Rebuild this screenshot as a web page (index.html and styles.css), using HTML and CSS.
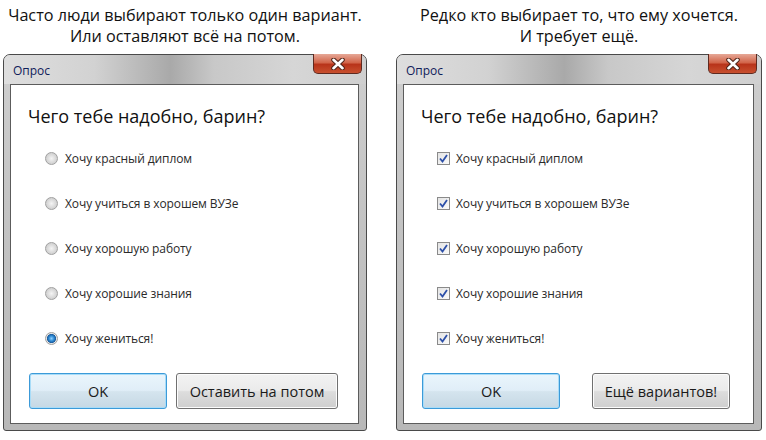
FILE: index.html
```html
<!DOCTYPE html>
<html lang="ru">
<head>
    <meta charset="UTF-8">
    <title>Опрос</title>
    <link rel="stylesheet" href="styles.css">
</head>
<body>
    <div class="page">
        <div class="panel panel-one">
            <p class="caption">Часто люди выбирают только один вариант.<br>Или оставляют всё на потом.</p>
            <div class="window">
                <div class="titlebar">
                    <span class="title">Опрос</span>
                    <span class="close">
                        <svg width="20" height="12" viewBox="0 0 20 12"><path d="M5.5 1.8 L14.5 10.2 M14.5 1.8 L5.5 10.2" stroke="#4e2418" stroke-width="4.6" stroke-linecap="round" fill="none"/><path d="M5.5 1.8 L14.5 10.2 M14.5 1.8 L5.5 10.2" stroke="#fff" stroke-width="2.6" stroke-linecap="round" fill="none"/></svg>
                    </span>
                </div>
                <div class="client">
                    <h2 class="question">Чего тебе надобно, барин?</h2>
                    <ul class="options">
                        <li class="option"><span class="radio"></span>Хочу красный диплом</li>
                        <li class="option"><span class="radio"></span>Хочу учиться в хорошем ВУЗе</li>
                        <li class="option"><span class="radio"></span>Хочу хорошую работу</li>
                        <li class="option"><span class="radio"></span>Хочу хорошие знания</li>
                        <li class="option"><span class="radio checked"></span>Хочу жениться!</li>
                    </ul>
                    <div class="buttons">
                        <button class="btn btn-default">OK</button>
                        <button class="btn btn-later">Оставить на потом</button>
                    </div>
                </div>
            </div>
        </div>

        <div class="panel panel-two">
            <p class="caption">Редко кто выбирает то, что ему хочется.<br>И требует ещё.</p>
            <div class="window">
                <div class="titlebar">
                    <span class="title">Опрос</span>
                    <span class="close">
                        <svg width="20" height="12" viewBox="0 0 20 12"><path d="M5.5 1.8 L14.5 10.2 M14.5 1.8 L5.5 10.2" stroke="#4e2418" stroke-width="4.6" stroke-linecap="round" fill="none"/><path d="M5.5 1.8 L14.5 10.2 M14.5 1.8 L5.5 10.2" stroke="#fff" stroke-width="2.6" stroke-linecap="round" fill="none"/></svg>
                    </span>
                </div>
                <div class="client">
                    <h2 class="question">Чего тебе надобно, барин?</h2>
                    <ul class="options">
                        <li class="option"><span class="check"><svg width="11" height="11" viewBox="0 0 11 11"><path d="M2 5.5 L4.5 8.5 L9 2" stroke="#2c4fa8" stroke-width="1.8" fill="none"/></svg></span>Хочу красный диплом</li>
                        <li class="option"><span class="check"><svg width="11" height="11" viewBox="0 0 11 11"><path d="M2 5.5 L4.5 8.5 L9 2" stroke="#2c4fa8" stroke-width="1.8" fill="none"/></svg></span>Хочу учиться в хорошем ВУЗе</li>
                        <li class="option"><span class="check"><svg width="11" height="11" viewBox="0 0 11 11"><path d="M2 5.5 L4.5 8.5 L9 2" stroke="#2c4fa8" stroke-width="1.8" fill="none"/></svg></span>Хочу хорошую работу</li>
                        <li class="option"><span class="check"><svg width="11" height="11" viewBox="0 0 11 11"><path d="M2 5.5 L4.5 8.5 L9 2" stroke="#2c4fa8" stroke-width="1.8" fill="none"/></svg></span>Хочу хорошие знания</li>
                        <li class="option"><span class="check"><svg width="11" height="11" viewBox="0 0 11 11"><path d="M2 5.5 L4.5 8.5 L9 2" stroke="#2c4fa8" stroke-width="1.8" fill="none"/></svg></span>Хочу жениться!</li>
                    </ul>
                    <div class="buttons">
                        <button class="btn btn-default">OK</button>
                        <button class="btn btn-more">Ещё вариантов!</button>
                    </div>
                </div>
            </div>
        </div>
    </div>
</body>
</html>
```

FILE: styles.css
```css
body {
    margin: 0;
    padding: 0;
    background: #fff;
    font-family: "Open Sans", "Noto Sans", sans-serif;
    color: #1e1e1e;
}

.page {
    display: flex;
    padding-left: 3px;
    gap: 29px;
}

.panel-one {
    width: 364px;
}

.panel-two {
    width: 366px;
}

.caption {
    margin: 5px 0 7px;
    text-align: center;
    font-size: 16.2px;
    line-height: 21px;
    color: #111;
}

.window {
    position: relative;
    box-sizing: border-box;
    height: 377px;
    display: flex;
    flex-direction: column;
    border: 1px solid #4a4a4a;
    border-radius: 7px 7px 3px 3px;
    background: linear-gradient(to bottom, #cfcfcf, #c4c4c4 40%, #b8b8b8);
    padding: 0 7px 6px 6px;
}

.titlebar {
    height: 29px;
    flex: none;
    display: flex;
    align-items: center;
    margin: 0 -7px 0 -6px;
    padding-left: 9px;
    border-radius: 6px 6px 0 0;
    background: linear-gradient(to right, #dedede, #d2d2d2 25%, #a9a9a9 46%, #c8c8c8 58%, #d6d6d6 80%, #cfcfcf);
}

.title {
    font-size: 12px;
    color: #10205a;
    margin-top: 2px;
}

.close {
    position: absolute;
    top: -1px;
    right: 4px;
    width: 47px;
    height: 19px;
    display: flex;
    align-items: center;
    justify-content: center;
    border: 1px solid #5e2a20;
    border-top: none;
    border-radius: 0 0 5px 5px;
    background: linear-gradient(to bottom, #e6a897, #d2664b 45%, #b8341a 55%, #c8502f);
}

.client {
    flex: 1;
    background: #fff;
    border: 1px solid #5c5c5c;
    padding: 19px 0 0;
}

.question {
    margin: 0 0 8px 17px;
    font-size: 18px;
    font-weight: normal;
    line-height: 24px;
    color: #111;
}

.options {
    list-style: none;
    margin: 0;
    padding: 0;
}

.option {
    height: 45px;
    display: flex;
    align-items: center;
    font-size: 12px;
    letter-spacing: -0.1px;
    color: #2a2a2a;
}

.radio {
    width: 11px;
    height: 11px;
    margin: 0 7px 0 34px;
    border-radius: 50%;
    border: 1px solid #a0a0a0;
    background: radial-gradient(circle at 50% 50%, #f4f4f4 0, #d8d8d8 55%, #c4c4c4 100%);
    box-sizing: content-box;
}

.radio.checked {
    background: radial-gradient(circle at 50% 50%, #8fd0ff 0, #2a86d0 35%, #1d5c9c 55%, #e8e8e8 62%, #d0d0d0 100%);
}

.check {
    width: 11px;
    height: 11px;
    margin: 0 6px 0 33px;
    border: 1px solid #8a8a8a;
    background: linear-gradient(135deg, #e4e4e4, #fafafa);
    display: flex;
}

.buttons {
    display: flex;
    margin-top: 12px;
    padding-left: 18px;
}

.btn {
    height: 36px;
    font-family: inherit;
    font-size: 14.5px;
    color: #1a1a1a;
    border: 1px solid #707070;
    border-radius: 3px;
    background: linear-gradient(to bottom, #f2f2f2, #ebebeb 48%, #dddddd 52%, #cfcfcf);
    box-shadow: inset 0 0 0 1px #fcfcfc;
}

.btn-default {
    width: 138px;
    border-color: #3c9ad8;
    background: linear-gradient(to bottom, #eaf5fc, #e0eef8 48%, #d4e4ee 52%, #c6d8e4);
    box-shadow: inset 0 0 0 1px #a8dcf8;
}

.btn-later {
    width: 162px;
    margin-left: 9px;
}

.btn-more {
    width: 138px;
    margin-left: 32px;
}
```
